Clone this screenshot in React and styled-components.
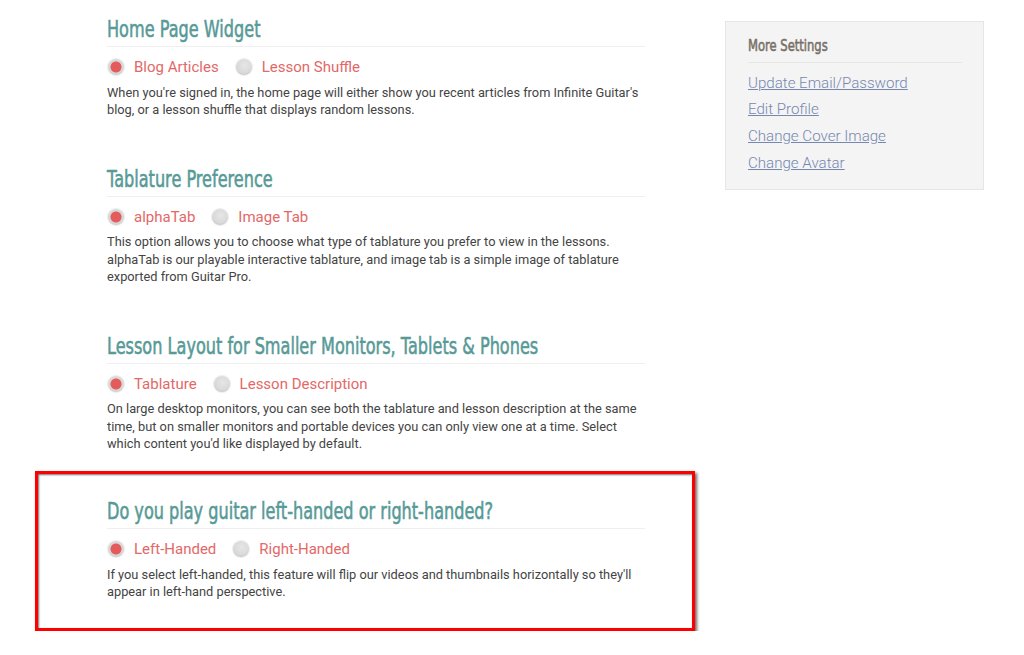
import React from 'react';
import styled, { createGlobalStyle } from 'styled-components';

const GlobalStyle = createGlobalStyle`
  body {
    margin: 0;
    background: #fff;
    font-family: Roboto, "Liberation Sans", sans-serif;
  }
`;

const sections = [
	{
		title: 'Home Page Widget',
		options: ['Blog Articles', 'Lesson Shuffle'],
		text: "When you're signed in, the home page will either show you recent articles from Infinite Guitar's blog, or a lesson shuffle that displays random lessons.",
	},
	{
		title: 'Tablature Preference',
		options: ['alphaTab', 'Image Tab'],
		text: 'This option allows you to choose what type of tablature you prefer to view in the lessons. alphaTab is our playable interactive tablature, and image tab is a simple image of tablature exported from Guitar Pro.',
	},
	{
		title: 'Lesson Layout for Smaller Monitors, Tablets & Phones',
		options: ['Tablature', 'Lesson Description'],
		text: "On large desktop monitors, you can see both the tablature and lesson description at the same time, but on smaller monitors and portable devices you can only view one at a time. Select which content you'd like displayed by default.",
	},
	{
		title: 'Do you play guitar left-handed or right-handed?',
		options: ['Left-Handed', 'Right-Handed'],
		text: "If you select left-handed, this feature will flip our videos and thumbnails horizontally so they'll appear in left-hand perspective.",
		highlight: true,
	},
];

const links = ['Update Email/Password', 'Edit Profile', 'Change Cover Image', 'Change Avatar'];

const App = () => {
	return (
		<>
			<GlobalStyle />
			<Page>
				<Main>
					{sections.map((s) => (
						<Section key={s.title} $highlight={s.highlight}>
							<Heading>
								<Condensed>{s.title}</Condensed>
							</Heading>
							<Options>
								{s.options.map((opt, i) => (
									<Option key={opt}>
										<Radio $checked={i === 0} />
										{opt}
									</Option>
								))}
							</Options>
							<Text>{s.text}</Text>
						</Section>
					))}
				</Main>
				<Sidebar>
					<SideTitle>
						<Condensed>More Settings</Condensed>
					</SideTitle>
					<LinkList>
						{links.map((l) => (
							<li key={l}>
								<SideLink href="#">{l}</SideLink>
							</li>
						))}
					</LinkList>
				</Sidebar>
			</Page>
		</>
	);
};

const Page = styled.div`
  display: flex;
  align-items: flex-start;
  padding-left: 107px;
`;

const Main = styled.main`
  width: 538px;
  display: flex;
  flex-direction: column;
`;

const Section = styled.section`
  padding: 28px 0 20px;
  &:first-child {
    padding-top: 17px;
  }
  ${(p) =>
		p.$highlight &&
		`
    border: 3px solid #ff0000;
    margin: -2px -50px 0 -72px;
    padding: 25.5px 47px 27.5px 69px;
    box-shadow: inset 1px 1px 2px rgba(0,0,0,0.55), 2px 2px 3px rgba(0,0,0,0.6);
  `}
`;

/* no condensed face is installed, so squeeze a plain sans */
const Condensed = styled.span`
  display: inline-block;
  white-space: nowrap;
  transform: scaleX(0.7);
  transform-origin: left center;
  -webkit-text-stroke: 0.6px currentColor;
`;

const Heading = styled.h2`
  margin: 0;
  font-family: "DejaVu Sans", "Liberation Sans", sans-serif;
  font-weight: normal;
  font-size: 23px;
  line-height: 24px;
  color: #579a97;
  padding-bottom: 5px;
  border-bottom: 1px solid #efefef;
  white-space: nowrap;
`;

const Options = styled.div`
  display: flex;
  align-items: center;
  height: 20px;
  margin-top: 10px;
  gap: 16px;
`;

const Option = styled.label`
  display: flex;
  align-items: center;
  gap: 10px;
  font-size: 15px;
  color: #e36868;
`;

const Radio = styled.span`
  width: 16px;
  height: 16px;
  margin-left: 1px;
  border-radius: 50%;
  box-sizing: border-box;
  background: ${(p) =>
		p.$checked
			? 'radial-gradient(circle, #e35b5b 0 5px, #d9d9d9 6px)'
			: 'radial-gradient(circle at 55% 40%, #e6e6e6, #d0d0d0)'};
  box-shadow: 0 0 1px 1px rgba(0, 0, 0, 0.08), inset 0 -1px 1px rgba(0, 0, 0, 0.06);
`;

const Text = styled.p`
  margin: 6.5px 0 0;
  font-size: 12.8px;
  line-height: 17.5px;
  color: #444;
`;

const Sidebar = styled.aside`
  width: 259px;
  box-sizing: border-box;
  margin-top: 21px;
  margin-left: 80px;
  background: #f4f4f4;
  border: 1px solid #e6e6e6;
  padding: 12px 21px 12px 22px;
`;

const SideTitle = styled.h3`
  margin: 0;
  font-family: "DejaVu Sans", "Liberation Sans", sans-serif;
  font-weight: normal;
  font-size: 16.5px;
  line-height: 24px;
  color: #787068;
  padding-bottom: 4px;
  border-bottom: 1px solid #e6e6e6;
`;

const LinkList = styled.ul`
  list-style: none;
  margin: 6.7px 0 0;
  padding: 0;
  li {
    line-height: 26.7px;
  }
`;

const SideLink = styled.a`
  font-size: 15.1px;
  font-weight: 300;
  color: #7688b0;
  text-decoration: underline;
`;

export default App;
